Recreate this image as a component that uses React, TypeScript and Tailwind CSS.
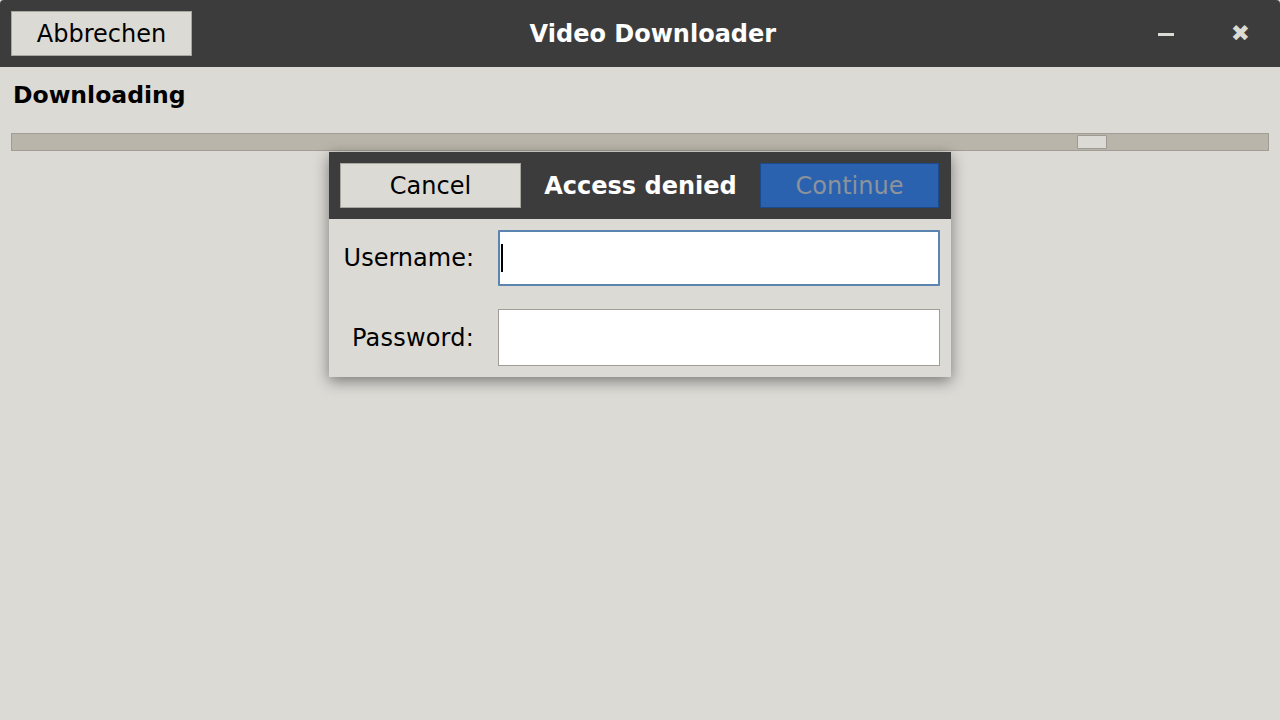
import React from 'react'

const font = "font-['DejaVu_Sans',_'Liberation_Sans',_sans-serif]"

export default function App() {
  return (
    <div className={`${font} relative h-[720px] w-[1280px] overflow-hidden bg-[#dcdad5] text-black`}>
      {/* Title bar */}
      <header className="flex h-[67px] items-center rounded-t-[4px] bg-[#3c3c3c] pl-[11px] pr-[30px]">
        <button className="h-[45px] w-[181px] border border-[#a9a69f] bg-[#dcdad5] text-[24px] leading-none text-black">
          Abbrechen
        </button>
        <div className="flex-1 pr-[44px] text-center text-[24px] font-bold text-white">
          Video Downloader
        </div>
        <div className="flex items-center gap-[57px] text-[#dcdad5]">
          <span className="mt-[2px] block h-[3px] w-[16px] bg-[#dcdad5]" />
          <span className="text-[23px] leading-none">✖</span>
        </div>
      </header>

      {/* Content */}
      <div className="px-[11px] pt-[13px]">
        <h1 className="pl-[2px] text-[23.5px] font-bold leading-[30px]">Downloading</h1>
        <div className="mt-[23px] flex h-[18px] items-center border border-[#a19d94] bg-[#b9b5aa] pl-[1065px]">
          <div className="h-[14px] w-[30px] rounded-[1px] border border-[#9e9a92] bg-[#dcdad5]" />
        </div>
      </div>

      {/* Access denied dialog */}
      <div className="absolute left-[329px] top-[152px] w-[622px] bg-[#dcdad5] shadow-[0_4px_14px_rgba(0,0,0,0.45)]">
        <div className="flex h-[67px] items-center justify-between bg-[#3c3c3c] pl-[11px] pr-[12px]">
          <button className="h-[45px] w-[181px] border border-[#a9a69f] bg-[#dcdad5] text-[24px] leading-none text-black">
            Cancel
          </button>
          <span className="text-[24px] font-bold text-white">Access denied</span>
          <button className="h-[45px] w-[179px] border border-[#1c4a8c] bg-[#2a62b0] text-[24px] leading-none text-[#8d939b]">
            Continue
          </button>
        </div>
        <div className="grid grid-cols-[145px_1fr] items-center gap-x-[24px] gap-y-[23px] pb-[11px] pr-[11px] pt-[11px]">
          <label className="text-right text-[24px]">Username:</label>
          <div className="flex h-[56px] items-center rounded-[1px] border-2 border-[#5b84b0] bg-white pl-[1px]">
            <span className="block h-[28px] w-[2px] bg-black" />
          </div>
          <label className="text-right text-[24px] tracking-[0.2px]">Password:</label>
          <div className="h-[57px] border border-[#a09d97] bg-white" />
        </div>
      </div>
    </div>
  )
}
